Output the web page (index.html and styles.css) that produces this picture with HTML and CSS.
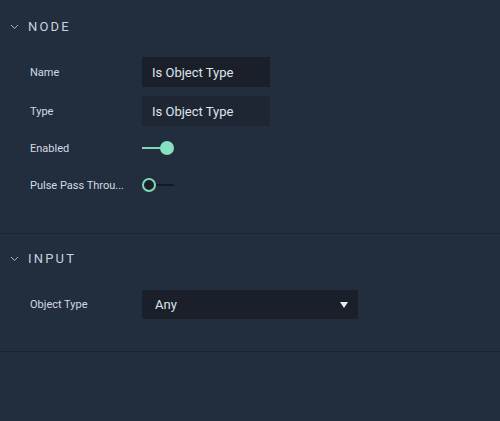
FILE: index.html
```html
<!DOCTYPE html>
<html>
<head>
<meta charset="utf-8">
<link rel="stylesheet" href="styles.css">
</head>
<body>
<div class="panel">
  <section class="section node">
    <div class="header">
      <svg class="chev" width="9" height="6" viewBox="0 0 9 6"><path d="M1 1 L4.5 4.5 L8 1" fill="none" stroke="#aab4c0" stroke-width="1"/></svg>
      <span class="title">NODE</span>
    </div>
    <div class="rows">
      <div class="row">
        <div class="label">Name</div>
        <div class="field dark">Is Object Type</div>
      </div>
      <div class="row">
        <div class="label">Type</div>
        <div class="field mid">Is Object Type</div>
      </div>
      <div class="row toggle-row short">
        <div class="label">Enabled</div>
        <div class="toggle on"><span class="track"></span><span class="knob"></span></div>
      </div>
      <div class="row toggle-row">
        <div class="label">Pulse Pass Throu...</div>
        <div class="toggle off"><span class="knob"></span><span class="track"></span></div>
      </div>
    </div>
  </section>
  <section class="section input">
    <div class="header">
      <svg class="chev" width="9" height="6" viewBox="0 0 9 6"><path d="M1 1 L4.5 4.5 L8 1" fill="none" stroke="#aab4c0" stroke-width="1"/></svg>
      <span class="title">INPUT</span>
    </div>
    <div class="rows">
      <div class="row select-row">
        <div class="label">Object Type</div>
        <div class="select"><span>Any</span><span class="arrow"></span></div>
      </div>
    </div>
  </section>
</div>
</body>
</html>
```
FILE: styles.css
```css
html, body {
  margin: 0;
  padding: 0;
  background: #222d3d;
  width: 500px;
  height: 421px;
  overflow: hidden;
}
.panel {
  font-family: Roboto, "Liberation Sans", sans-serif;
}
.section {
  border-bottom: 1px solid #1b2330;
}
.section.node {
  padding-bottom: 33px;
}
.section.input {
  padding-bottom: 32px;
}
.header {
  display: flex;
  align-items: center;
  padding-left: 10px;
}
.node .header {
  height: 52px;
}
.input .header {
  height: 48px;
}
.chev {
  margin-right: 9px;
  margin-top: 1px;
}
.title {
  color: #c7d2dd;
  font-size: 13px;
  letter-spacing: 2.2px;
  font-weight: 400;
}
.rows {
  display: flex;
  flex-direction: column;
  gap: 9px;
  padding-left: 30px;
}
.node .rows {
  padding-top: 5px;
}
.input .rows {
  padding-top: 8px;
}
.row {
  display: flex;
  align-items: center;
  height: 30px;
}
.row.short {
  height: 26px;
}
.row.select-row {
  height: 29px;
}
.label {
  width: 112px;
  color: #d3dbe4;
  font-size: 11px;
}
.field {
  width: 128px;
  box-sizing: border-box;
  height: 30px;
  padding-left: 10px;
  display: flex;
  align-items: center;
  color: #dfe5ec;
  font-size: 13px;
}
.field.dark { background: #1a1f29; }
.field.mid { background: #1e2634; }
.toggle {
  display: flex;
  align-items: center;
  width: 40px;
}
.toggle.on .track {
  width: 19px;
  height: 2px;
  background: #7ed8b8;
}
.toggle.on .knob {
  width: 14px;
  height: 14px;
  border-radius: 50%;
  background: #86e1c0;
  margin-left: -1px;
}
.toggle.off .knob {
  width: 10px;
  height: 10px;
  border-radius: 50%;
  border: 2px solid #7ed8b8;
  background: #1a1f29;
}
.toggle.off .track {
  width: 18px;
  height: 2px;
  background: #141a22;
}
.select {
  width: 216px;
  box-sizing: border-box;
  height: 29px;
  padding-left: 13px;
  padding-right: 10px;
  background: #1a1f29;
  border-radius: 2px;
  display: flex;
  align-items: center;
  justify-content: space-between;
  color: #dfe5ec;
  font-size: 13px;
}
.arrow {
  width: 0;
  height: 0;
  border-left: 4.5px solid transparent;
  border-right: 4.5px solid transparent;
  border-top: 6px solid #e8edf2;
}
```
